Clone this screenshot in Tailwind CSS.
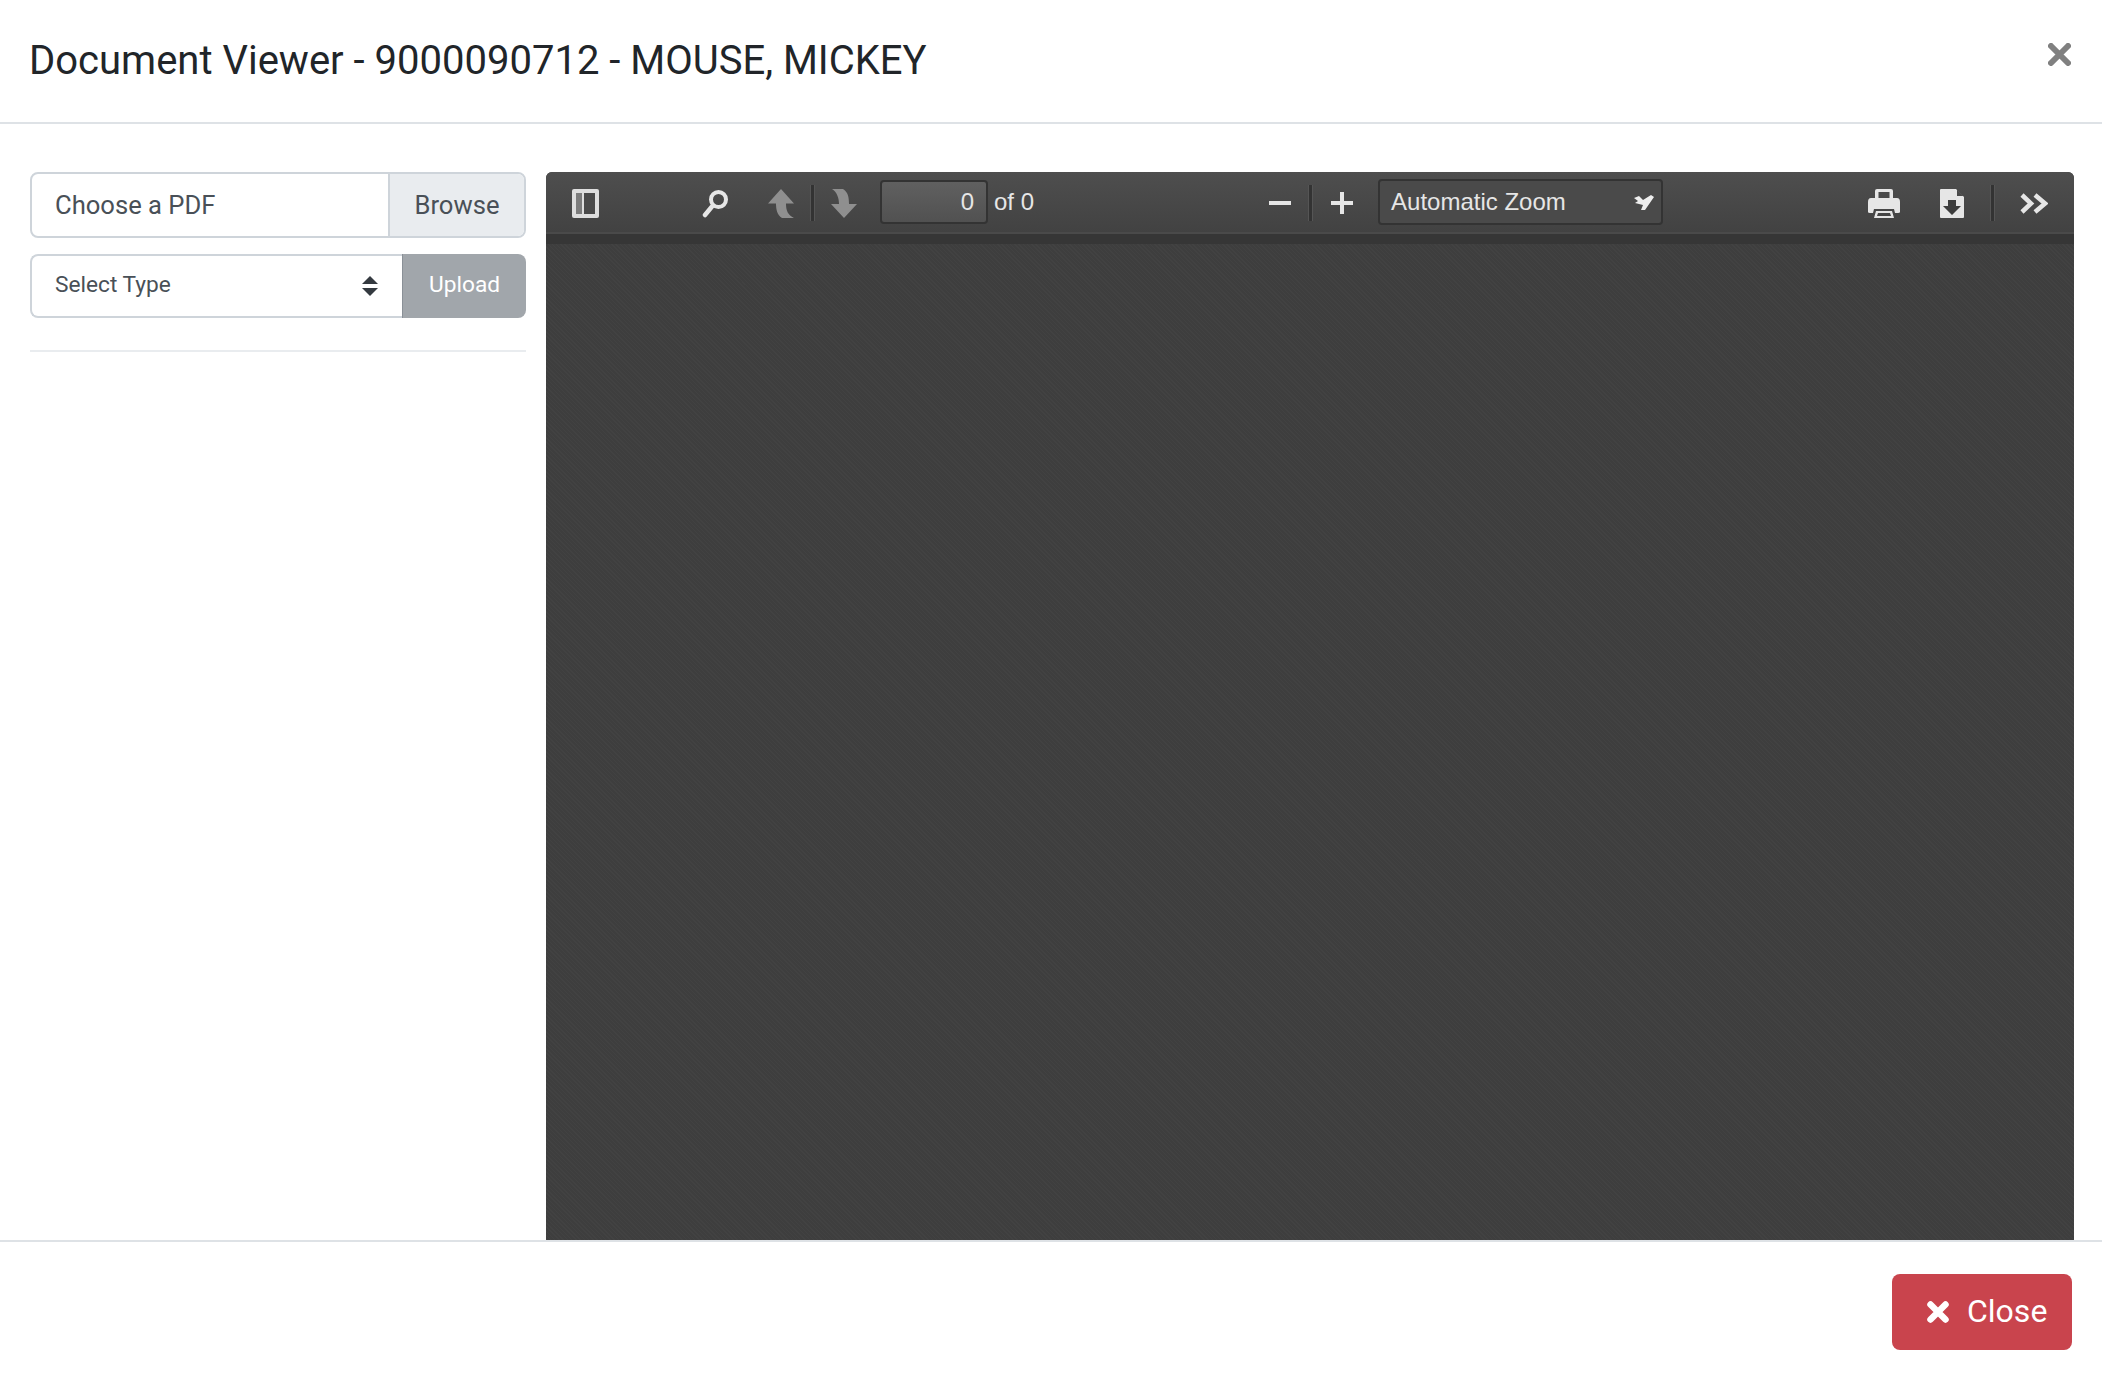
<!DOCTYPE html>
<html lang="en">
<head>
    <meta charset="UTF-8">
    <title>Document Viewer</title>
    <script src="https://cdn.jsdelivr.net/npm/@tailwindcss/browser@4"></script>
</head>
<body class="bg-white">
    <div class="flex flex-col w-[2102px] h-[1378px] overflow-hidden font-['Roboto',sans-serif]">

        <!-- header -->
        <div class="flex justify-between h-[124px] shrink-0 border-b-2 border-[#dee2e6] pl-[29px] pr-[31px]">
            <h1 class="mt-[37px] text-[40px] leading-[48px] font-normal text-[#212529]">Document Viewer - 9000090712 - MOUSE, MICKEY</h1>
            <svg class="mt-[43px]" width="23" height="23" viewBox="0 0 23 23"><path d="M3 3 L20 20 M20 3 L3 20" stroke="#808080" stroke-width="6" stroke-linecap="round"/></svg>
        </div>

        <!-- body -->
        <div class="flex flex-1 min-h-0 pl-[30px] pr-[28px] pt-[48px] gap-[20px]">

            <!-- upload form -->
            <div class="w-[496px] shrink-0">
                <div class="flex h-[66px] border-2 border-[#ced4da] rounded-[8px] overflow-hidden text-[25.6px] text-[#495057]">
                    <div class="flex-1 flex items-center pl-[23px] pt-[1px]">Choose a PDF</div>
                    <div class="w-[136px] flex items-center justify-center bg-[#e9ecef] border-l-2 border-[#ced4da] pt-[1px]">Browse</div>
                </div>
                <div class="flex h-[64px] mt-[16px] text-[22.7px]">
                    <div class="flex-1 flex items-center justify-between pl-[23px] pr-[24px] border-2 border-r-0 border-[#ced4da] rounded-l-[8px] text-[#495057]">
                        <span class="-mt-[2px]">Select Type</span>
                        <svg width="16" height="20" viewBox="0 0 16 20"><path d="M8 0 L16 8 L0 8 Z M0 12 L16 12 L8 20 Z" fill="#343a40"/></svg>
                    </div>
                    <div class="w-[124px] flex items-center justify-center bg-[#a1a6ab] border-l border-[#8a9097] rounded-r-[8px] text-white pb-[2px]">Upload</div>
                </div>
                <div class="mt-[32px] h-[2px] bg-[#e9ecef]"></div>
            </div>

            <!-- pdf viewer -->
            <div class="flex-1 flex flex-col rounded-t-[6px] overflow-hidden bg-[#404040] font-['Liberation_Sans',sans-serif]">
                <div class="flex items-center h-[62px] shrink-0 bg-linear-to-b from-[#4e4e4e] to-[#424242] border-b-2 border-[#4a4a4a] text-[24px] text-[#e6e6e6]">

                    <!-- sidebar toggle -->
                    <svg class="ml-[26px] mt-[2px]" width="27" height="29" viewBox="0 0 27 29"><rect width="27" height="29" rx="2" fill="#dedede"/><rect x="4" y="4" width="6" height="21" fill="#7c7c7c"/><rect x="12" y="4" width="11" height="21" fill="#4a4a4a"/></svg>

                    <!-- find -->
                    <svg class="ml-[103px] mt-[2px]" width="27" height="29" viewBox="0 0 27 29"><circle cx="16.5" cy="10.5" r="7.5" fill="none" stroke="#e6e6e6" stroke-width="4"/><path d="M10 17.5 L3 26" stroke="#e6e6e6" stroke-width="4.5" stroke-linecap="round"/></svg>

                    <!-- page up / down -->
                    <svg class="ml-[39px] mt-[2px]" width="27" height="29" viewBox="0 0 27 29"><path d="M13 0 L26 14.5 L18 14.5 C18 22 20 26 26 29 L14 29 C9 26 8 20 8 14.5 L0 14.5 Z" fill="#8f8f8f"/></svg>
                    <div class="ml-[15px] mt-[2px] w-[5px] h-[36px] bg-[#333] border-x border-[#555]"></div>
                    <svg class="ml-[16px] mt-[2px]" width="27" height="29" viewBox="0 0 27 29"><path d="M1 0 L12 0 C17 3 18 8 18 15 L26 15 L13 29 L0 15 L8 15 C8 9 6 3 1 0 Z" fill="#8f8f8f"/></svg>

                    <!-- page number -->
                    <div class="ml-[22px] w-[108px] h-[44px] flex items-center justify-end pr-[12px] rounded-[4px] border-2 border-[#333] bg-linear-to-b from-[#606060] to-[#515151]">0</div>
                    <span class="ml-[6px]">of 0</span>

                    <!-- zoom -->
                    <svg class="ml-[235px] mt-[2px]" width="22" height="6" viewBox="0 0 22 6"><rect y="1" width="22" height="4" fill="#e6e6e6"/></svg>
                    <div class="ml-[17px] mt-[2px] w-[5px] h-[36px] bg-[#333] border-x border-[#555]"></div>
                    <svg class="ml-[18px] mt-[2px]" width="22" height="22" viewBox="0 0 22 22"><path d="M9 0 H13 V9 H22 V13 H13 V22 H9 V13 H0 V9 H9 Z" fill="#e6e6e6"/></svg>
                    <div class="ml-[25px] w-[285px] h-[46px] flex items-center justify-between pl-[11px] pr-[7px] rounded-[4px] border-2 border-[#333] bg-[#4a4a4a]">
                        <span>Automatic Zoom</span>
                        <svg width="20" height="15" viewBox="0 0 20 15"><path d="M0 3 L5 1 L9 5 L17 0 L20 2 L11 15 L7 15 L9 10 L1 8 L4 6 Z" fill="#eeeeee"/></svg>
                    </div>

                    <div class="flex-1"></div>

                    <!-- print -->
                    <svg class="mt-[2px]" width="32" height="29" viewBox="0 0 32 29"><path d="M7 9 V2 Q7 0 9 0 H23 Q25 0 25 2 V9 H21.5 V3 H10.5 V9 Z" fill="#e6e6e6"/><path d="M3 9 H29 Q32 9 32 13 V23 Q32 24 30 24 H27 L26 20 H6 L5 24 H2 Q0 24 0 23 V13 Q0 9 3 9 Z" fill="#e6e6e6"/><path d="M8 22 H24 L26 29 H6 Z M10 24 L9 27 H23 L22 24 Z" fill="#e6e6e6" fill-rule="evenodd"/></svg>

                    <!-- download -->
                    <svg class="ml-[40px] mt-[2px]" width="24" height="29" viewBox="0 0 24 29"><path d="M1 0 H16 L24 8 V28 Q24 29 23 29 H1 Q0 29 0 28 V1 Q0 0 1 0 Z" fill="#e6e6e6"/><path d="M17 0.5 L23.5 7 H17 Z" fill="#4a4a4a"/><path d="M8 11 H16 V17 H21 L12 26 L3 17 H8 Z" fill="#3d3d3d"/></svg>

                    <div class="ml-[26px] mt-[2px] w-[5px] h-[36px] bg-[#333] border-x border-[#555]"></div>

                    <!-- secondary toolbar -->
                    <svg class="ml-[25px] mr-[26px] mt-[2px]" width="28" height="21" viewBox="0 0 28 21"><path d="M2 2 L11 10.5 L2 19 M15 2 L25 10.5 L15 19" fill="none" stroke="#e6e6e6" stroke-width="4.5"/></svg>
                </div>
                <div class="h-[10px] shrink-0 bg-[#363636]"></div>
                <div class="flex-1 bg-[repeating-linear-gradient(45deg,#424242_0px,#424242_1px,#3e3e3e_1px,#3e3e3e_3px)]"></div>
            </div>
        </div>

        <!-- footer -->
        <div class="flex justify-end h-[138px] shrink-0 border-t-2 border-[#dee2e6] pt-[32px] pr-[30px]">
            <button class="flex items-center h-[76px] w-[180px] pl-[35px] rounded-[8px] bg-[#c9444d] text-white text-[32px]">
                <svg width="22" height="22" viewBox="0 0 22 22"><path d="M3.5 3.5 L18.5 18.5 M18.5 3.5 L3.5 18.5" stroke="#fff" stroke-width="6.5" stroke-linecap="round"/></svg>
                <span class="ml-[18px] -mt-[2px]">Close</span>
            </button>
        </div>
    </div>
</body>
</html>
